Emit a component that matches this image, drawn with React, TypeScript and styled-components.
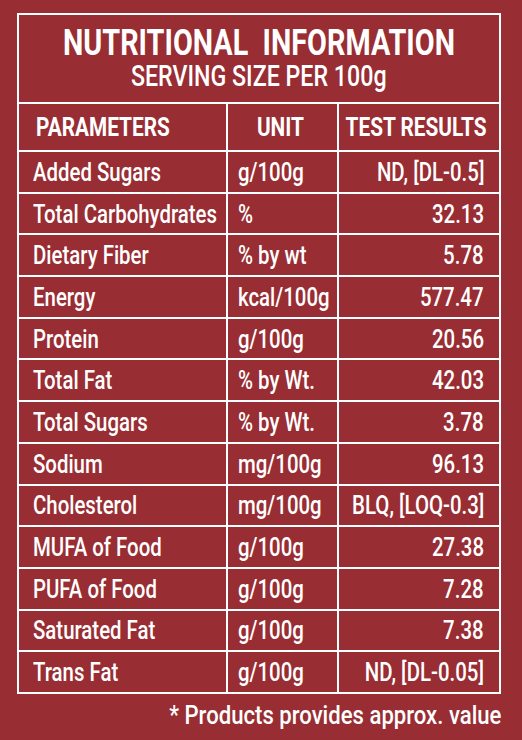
import {FC, ReactNode} from "react";
import styled, {createGlobalStyle} from "styled-components";

const GlobalStyle = createGlobalStyle`
  html, body {
    margin: 0;
    padding: 0;
    background-color: #982d33;
  }

  body {
    font-family: Roboto, "Liberation Sans", sans-serif;
    color: #ffffff;
  }
`;

type alignType = "left" | "center" | "right";

const StyledPage = styled.main`
  width: 522px;
  height: 740px;
  box-sizing: border-box;
  padding: 13px 21px 0 17px;
  display: flex;
  flex-direction: column;
`;

const StyledCard = styled.section`
  border: 2px solid #ffffff;
  display: flex;
  flex-direction: column;
`;

const StyledHeading = styled.header`
  height: 87px;
  box-sizing: border-box;
  display: flex;
  flex-direction: column;
  align-items: center;
  padding-top: 13px;
`;

const StyledTitle = styled.h1`
  margin: 0;
  font-size: 36px;
  line-height: 30px;
  font-weight: 700;
  white-space: nowrap;
`;

const StyledSubtitle = styled.p`
  margin: 3px 0 0;
  font-size: 29px;
  line-height: 30px;
  font-weight: 500;
  white-space: nowrap;
`;

// Roboto squeezed sideways to stand in for the condensed face of the label
const StyledNarrow = styled.span<{ $origin?: alignType, $scale?: number }>`
  display: inline-block;
  vertical-align: top;
  transform: scaleX(${({$scale}) => $scale ?? 0.8});
  transform-origin: ${({$origin}) => $origin ?? "left"} center;
`;

const StyledRow = styled.div<{ $head?: boolean }>`
  display: grid;
  grid-template-columns: 207px 111px 1fr;
  height: ${({$head}) => ($head ? "48px" : "41.7px")};
  box-sizing: border-box;
  border-top: 2px solid #ffffff;
  font-size: ${({$head}) => ($head ? "26px" : "25.5px")};
  font-weight: ${({$head}) => ($head ? 700 : 500)};
`;

const StyledCell = styled.div<{ $align?: alignType, $head?: boolean }>`
  display: flex;
  align-items: center;
  justify-content: ${({$align}) =>
    $align === "right" ? "flex-end" : $align === "center" ? "center" : "flex-start"};
  padding: 0 15px 0 ${({$head}) => ($head ? "17px" : "14px")};
  white-space: nowrap;
  min-width: 0;

  & + & {
    border-left: 2px solid #ffffff;
    padding-left: 10px;
  }
`;

const StyledNote = styled.p`
  margin: 7px 0 0;
  text-align: right;
  font-size: 25px;
  line-height: 30px;
  font-weight: 500;
  white-space: nowrap;
`;

type nutrientType = {
    name: string,
    unit: string,
    result: string
};

const nutrients: nutrientType[] = [
    {name: "Added Sugars", unit: "g/100g", result: "ND, [DL-0.5]"},
    {name: "Total Carbohydrates", unit: "%", result: "32.13"},
    {name: "Dietary Fiber", unit: "% by wt", result: "5.78"},
    {name: "Energy", unit: "kcal/100g", result: "577.47"},
    {name: "Protein", unit: "g/100g", result: "20.56"},
    {name: "Total Fat", unit: "% by Wt.", result: "42.03"},
    {name: "Total Sugars", unit: "% by Wt.", result: "3.78"},
    {name: "Sodium", unit: "mg/100g", result: "96.13"},
    {name: "Cholesterol", unit: "mg/100g", result: "BLQ, [LOQ-0.3]"},
    {name: "MUFA of Food", unit: "g/100g", result: "27.38"},
    {name: "PUFA of Food", unit: "g/100g", result: "7.28"},
    {name: "Saturated Fat", unit: "g/100g", result: "7.38"},
    {name: "Trans Fat", unit: "g/100g", result: "ND, [DL-0.05]"}
];

interface ICell {
    align?: alignType,
    head?: boolean,
    children: ReactNode
}

const Cell: FC<ICell> = ({align = "left", head, children}) => (
    <StyledCell $align={align} $head={head}>
        <StyledNarrow $origin={align}>{children}</StyledNarrow>
    </StyledCell>
);

const App: FC = () => {
    return (
        <>
            <GlobalStyle/>
            <StyledPage>
                <StyledCard>
                    <StyledHeading>
                        <StyledTitle>
                            <StyledNarrow $origin="center">NUTRITIONAL&nbsp; INFORMATION</StyledNarrow>
                        </StyledTitle>
                        <StyledSubtitle>
                            <StyledNarrow $origin="center">SERVING SIZE PER 100g</StyledNarrow>
                        </StyledSubtitle>
                    </StyledHeading>
                    <StyledRow $head>
                        <Cell head>PARAMETERS</Cell>
                        <Cell head align="center">UNIT</Cell>
                        <Cell head align="center">TEST RESULTS</Cell>
                    </StyledRow>
                    {nutrients.map((item) => (
                        <StyledRow key={item.name}>
                            <Cell>{item.name}</Cell>
                            <Cell>{item.unit}</Cell>
                            <Cell align="right">{item.result}</Cell>
                        </StyledRow>
                    ))}
                </StyledCard>
                <StyledNote>
                    <StyledNarrow $origin="right" $scale={0.885}>* Products provides approx. value</StyledNarrow>
                </StyledNote>
            </StyledPage>
        </>
    );
};

export default App;
